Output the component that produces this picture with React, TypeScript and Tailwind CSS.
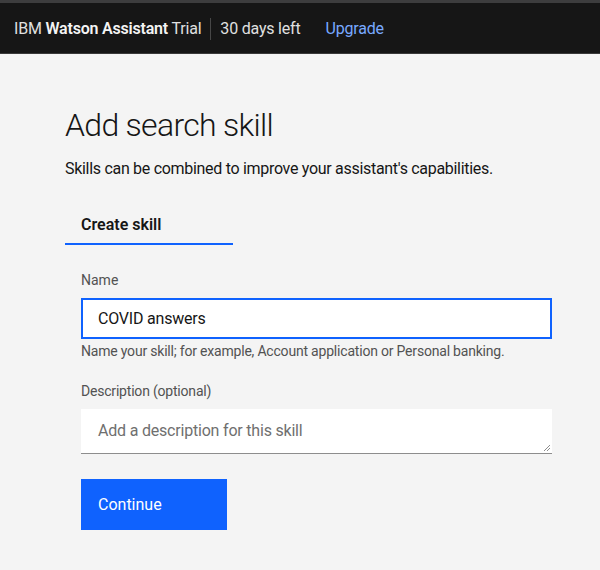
import React from "react";

const font = { fontFamily: 'Roboto, "Noto Sans", sans-serif' };

const Header = () => {
  return (
    <div className="bg-[#161616] border-t-[3px] border-t-[#3d3d3e] border-b border-b-[#3a3a3a] h-[54px] flex items-center pt-px px-[14px] text-[16px] text-[#e0e0e0] tracking-[-0.2px]">
      <span>
        IBM <span className="font-semibold text-[#f4f4f4]">Watson Assistant</span> Trial
      </span>
      <span className="w-px h-[22px] bg-[#474747] mx-[9px]" />
      <span>30 days left</span>
      <span className="ml-[25px] text-[#78a9ff]">Upgrade</span>
    </div>
  );
};

export default function App() {
  return (
    <div className="w-[600px] h-[570px] bg-[#f4f4f4] overflow-hidden" style={font}>
      <Header />
      <div className="pl-[65px] pt-[51px]">
        <h1 className="text-[32px] font-light text-[#161616] leading-[40px] tracking-[-0.7px]">Add search skill</h1>
        <p className="mt-[13px] text-[16px] text-[#161616] leading-[22px] tracking-[-0.3px]">
          Skills can be combined to improve your assistant's capabilities.
        </p>

        <div className="mt-[33px] w-[168px] border-b-2 border-[#0f62fe] pl-[16px] pb-[6px]">
          <span className="text-[16px] font-semibold text-[#161616]">Create skill</span>
        </div>

        <div className="pl-[16px] w-[487px]">
          <label className="block mt-[26px] text-[14px] text-[#525252] leading-[18px]">Name</label>
          <div className="mt-[9px] h-[41px] bg-white border-2 border-[#0f62fe] flex items-center pl-[15px] text-[16px] text-[#161616] tracking-[-0.2px]">
            COVID answers
          </div>
          <p className="mt-[3px] text-[14px] text-[#525252] leading-[18px] tracking-[-0.2px]">
            Name your skill; for example, Account application or Personal banking.
          </p>

          <label className="block mt-[22px] text-[14px] text-[#525252] leading-[18px] tracking-[-0.2px]">Description (optional)</label>
          <div className="relative mt-[9px] h-[45px] bg-white border-b border-[#8d8d8d] pl-[17px] pt-[10px] text-[16px] text-[#6f6f6f] tracking-[-0.2px]">
            Add a description for this skill
            <svg className="absolute right-[1px] bottom-[1px]" width="8" height="8" viewBox="0 0 8 8">
              <path d="M7 1 L1 7 M7 4 L4 7" stroke="#8d8d8d" strokeWidth="1" />
            </svg>
          </div>

          <button className="mt-[25px] h-[51px] w-[146px] bg-[#0f62fe] text-white text-[16px] text-left pl-[17px]">
            Continue
          </button>
        </div>
      </div>
    </div>
  );
}
